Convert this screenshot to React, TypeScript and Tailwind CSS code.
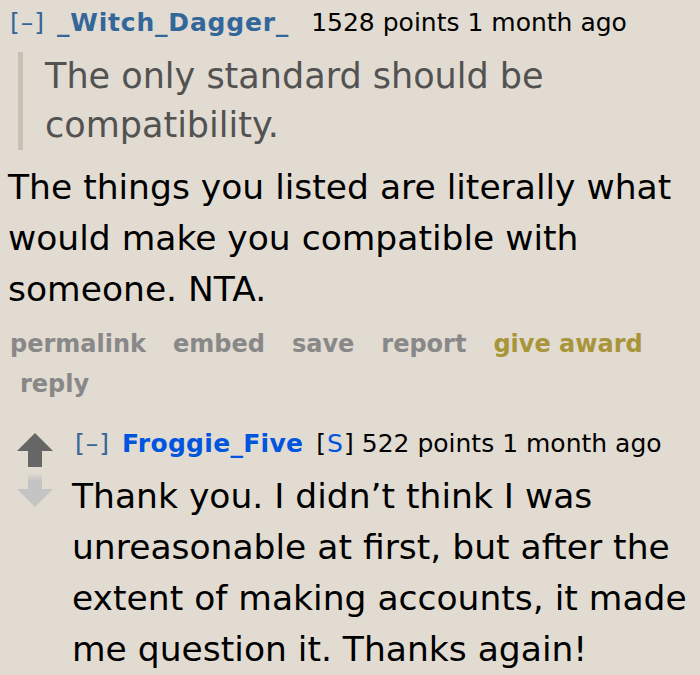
const FONT = "font-['Verdana','DejaVu_Sans',sans-serif]";

function Arrow({ up }: { up?: boolean }) {
  return (
    <svg width="36" height="34" viewBox="0 0 36 34" className="block">
      {up ? (
        <>
          <polygon points="18,0 36,18 0,18" fill="#666666" />
          <rect x="11" y="17" width="14" height="17" fill="#666666" />
        </>
      ) : (
        <>
          <defs>
            <linearGradient id="dg" x1="0" y1="0" x2="0" y2="1">
              <stop offset="0" stopColor="#e2dbd1" />
              <stop offset="0.45" stopColor="#c4c4c4" />
            </linearGradient>
          </defs>
          <rect x="11" y="0" width="14" height="17" fill="url(#dg)" />
          <polygon points="0,16 36,16 18,34" fill="#c4c4c4" />
        </>
      )}
    </svg>
  );
}

export default function App() {
  return (
    <div className={`${FONT} h-[675px] w-[700px] overflow-hidden bg-[#e2dbd1] text-black`}>
      <div className="flex pl-[10px] pt-[7px] text-[25px] leading-[32px]">
        <span className="tracking-[1px] text-[#336699]">[–]</span>
        <span className="ml-[12px] font-bold tracking-[0.8px] text-[#336699]">_Witch_Dagger_</span>
        <span className="ml-[22px]">1528 points 1 month ago</span>
      </div>
      <div className="ml-[18px] mt-[13px] border-l-[5px] border-[#c8c1b1] pl-[22px] text-[35px] leading-[49px] text-[#525252]">
        The only standard should be compatibility.
      </div>
      <p className="mt-[12px] px-[8px] text-[34.5px] leading-[51px]">
        The things you listed are literally what would make you compatible with someone. NTA.
      </p>
      <ul className="mt-[9px] flex flex-wrap gap-x-[27px] pl-[10px] text-[24px] font-bold leading-[40px] text-[#888888]">
        <li>permalink</li>
        <li>embed</li>
        <li>save</li>
        <li>report</li>
        <li className="text-[#a8953a]">give award</li>
        <li className="pl-[10px]">reply</li>
      </ul>
      <div className="mt-[24px] flex">
        <div className="ml-[17px] flex w-[36px] flex-col gap-[6px] pt-[5px]">
          <Arrow up />
          <Arrow />
        </div>
        <div className="ml-[19px]">
          <div className="flex pl-[3px] text-[25px] leading-[32px]">
            <span className="tracking-[1px] text-[#336699]">[–]</span>
            <span className="ml-[12px] font-bold tracking-[0.3px] text-[#0055df]">Froggie_Five</span>
            <span className="ml-[13px] tracking-[1px]">
              [<span className="text-[#0055df]">S</span>]
            </span>
            <span className="ml-[7px]">522 points 1 month ago</span>
          </div>
          <p className="mt-[11px] text-[34.5px] leading-[51px]">
            Thank you. I didn’t think I was unreasonable at first, but after the extent of making accounts, it made me question it. Thanks again!
          </p>
        </div>
      </div>
    </div>
  );
}
